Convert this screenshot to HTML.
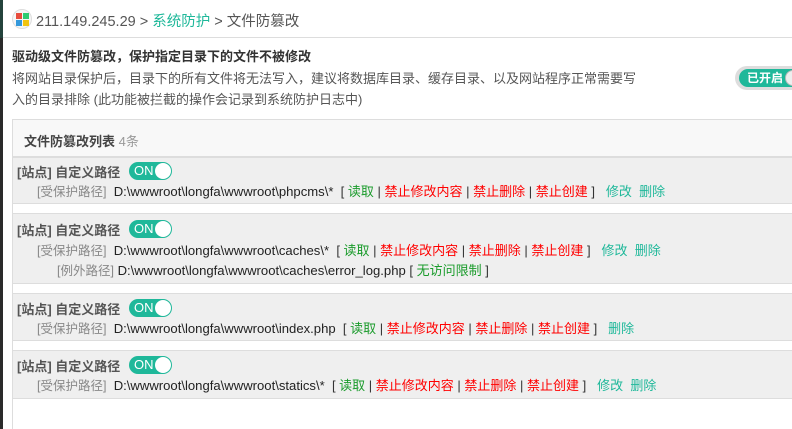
<!DOCTYPE html>
<html><head><meta charset="utf-8"><style>
*{margin:0;padding:0;box-sizing:border-box}
html,body{width:792px;height:429px;overflow:hidden}
body{background:#fff;font-family:"Liberation Sans","Noto Sans CJK SC",sans-serif;color:#333;position:relative;font-size:13px}
.strip{position:absolute;left:0;top:0;width:3px;height:429px;background:#2a2a2a}
.strip:before{content:"";position:absolute;left:0;top:0;width:3px;height:38px;background:#24433c}
.hdr{position:absolute;left:3px;top:0;right:0;height:38px;border-bottom:1px solid #ddd;background:#fff}
.logo{position:absolute;left:9px;top:9px;width:20px;height:20px;border-radius:50%;border:1px solid #ddd;background:#f6f6f6}
.logo i{position:absolute;width:6px;height:6px}
.crumb{position:absolute;left:33px;top:10px;font-size:14.5px;color:#555;white-space:nowrap}
.crumb .g{color:#1fb89a}
.t{position:absolute;white-space:nowrap}
.box{position:absolute;left:12px;top:119px;width:800px;height:320px;border:1px solid #ddd;border-right:none}
.bh{position:absolute;left:0;top:0;right:0;height:37px;background:#f8f8f8;border-bottom:1px solid #ddd}
.row{position:absolute;left:0;right:0;background:#efefef;border-top:1px solid #ddd;border-bottom:1px solid #ddd}
.on{display:inline-block;position:absolute;width:43px;height:18px;border-radius:9px;background:#1fb89a;color:#fff;font-size:13px;line-height:18px;padding-left:5px}
.on:after{content:"";position:absolute;right:1px;top:1px;width:16px;height:16px;border-radius:50%;background:#fff}
.st{font-size:13px;font-weight:bold;color:#555}
.p{font-size:13.1px}
.gr{color:#888;font-size:12.5px}.k{color:#222}.r{color:#f00}.gn{color:#1a9b2b}.tl{color:#1fb89a}
</style></head><body>
<div class="strip"></div>
<div class="hdr">
 <div class="logo"><i style="left:3px;top:3px;background:#e74c3c"></i><i style="left:10px;top:3px;background:#2ecc71"></i><i style="left:3px;top:10px;background:#3498db"></i><i style="left:10px;top:10px;background:#f1c40f"></i></div>
 <div class="crumb">211.149.245.29 &gt; <span class="g">系统防护</span> &gt; 文件防篡改</div>
</div>
<div class="t" style="left:12px;top:46px;font-size:13px;font-weight:bold;color:#333">驱动级文件防篡改，保护指定目录下的文件不被修改</div>
<div class="t" style="left:12px;top:68px;font-size:13px;color:#555">将网站目录保护后，目录下的所有文件将无法写入，建议将数据库目录、缓存目录、以及网站程序正常需要写</div>
<div class="t" style="left:12px;top:89px;font-size:13px;color:#555">入的目录排除 (此功能被拦截的操作会记录到系统防护日志中)</div>
<div style="position:absolute;left:735px;top:66px;width:70px;height:24px;border-radius:12px;background:#ddd"></div>
<div style="position:absolute;left:739px;top:69px;width:66px;height:18px;border-radius:9px;background:#1fb89a;color:#fff;font-size:12px;font-weight:bold;line-height:18px;padding-left:8px">已开启</div>
<div style="position:absolute;left:785px;top:70px;width:16px;height:16px;border-radius:50%;background:#eee;border:1px solid #bbb"></div>
<div class="box">
 <div class="bh"><span class="t" style="left:11px;top:11px;font-size:13px;font-weight:bold;color:#444">文件防篡改列表 <span style="font-weight:normal;color:#999">4条</span></span></div>
 <div class="row" style="top:37px;height:47px">
  <span class="t st" style="left:4px;top:4px">[站点] 自定义路径</span><span class="on" style="left:116px;top:4px">ON</span>
  <span class="t" style="left:24px;top:23px"><span class="gr">[受保护路径]</span>&nbsp; <span class="k p">D:\wwwroot\longfa\wwwroot\phpcms\*</span>&nbsp; [ <span class="gn">读取</span> | <span class="r">禁止修改内容</span> | <span class="r">禁止删除</span> | <span class="r">禁止创建</span> ]&nbsp;&nbsp; <span class="tl">修改</span>&nbsp; <span class="tl">删除</span></span>
 </div>
 <div class="row" style="top:93px;height:71px">
  <span class="t st" style="left:4px;top:6px">[站点] 自定义路径</span><span class="on" style="left:116px;top:6px">ON</span>
  <span class="t" style="left:24px;top:26px"><span class="gr">[受保护路径]</span>&nbsp; <span class="k p">D:\wwwroot\longfa\wwwroot\caches\*</span>&nbsp; [ <span class="gn">读取</span> | <span class="r">禁止修改内容</span> | <span class="r">禁止删除</span> | <span class="r">禁止创建</span> ]&nbsp;&nbsp; <span class="tl">修改</span>&nbsp; <span class="tl">删除</span></span>
  <span class="t" style="left:44px;top:46px"><span class="gr">[例外路径]</span> <span class="k p">D:\wwwroot\longfa\wwwroot\caches\error_log.php</span> [ <span class="gn">无访问限制</span> ]</span>
 </div>
 <div class="row" style="top:173px;height:48px">
  <span class="t st" style="left:4px;top:5px">[站点] 自定义路径</span><span class="on" style="left:116px;top:5px">ON</span>
  <span class="t" style="left:24px;top:24px"><span class="gr">[受保护路径]</span>&nbsp; <span class="k p">D:\wwwroot\longfa\wwwroot\index.php</span>&nbsp; [ <span class="gn">读取</span> | <span class="r">禁止修改内容</span> | <span class="r">禁止删除</span> | <span class="r">禁止创建</span> ]&nbsp;&nbsp; <span class="tl">删除</span></span>
 </div>
 <div class="row" style="top:230px;height:49px">
  <span class="t st" style="left:4px;top:5px">[站点] 自定义路径</span><span class="on" style="left:116px;top:5px">ON</span>
  <span class="t" style="left:24px;top:24px"><span class="gr">[受保护路径]</span>&nbsp; <span class="k p">D:\wwwroot\longfa\wwwroot\statics\*</span>&nbsp; [ <span class="gn">读取</span> | <span class="r">禁止修改内容</span> | <span class="r">禁止删除</span> | <span class="r">禁止创建</span> ]&nbsp;&nbsp; <span class="tl">修改</span>&nbsp; <span class="tl">删除</span></span>
 </div>
</div>
</body></html>
